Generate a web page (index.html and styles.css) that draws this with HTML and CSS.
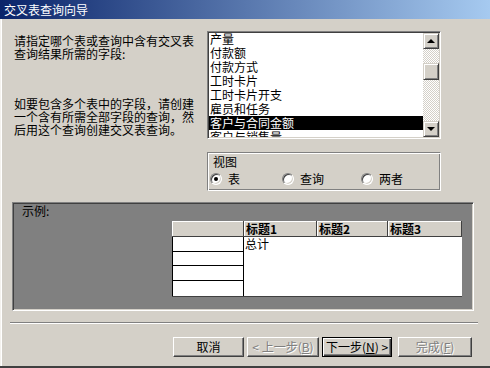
FILE: index.html
```html
<!DOCTYPE html>
<html lang="zh-CN">
<head>
  <meta charset="UTF-8" />
  <title>交叉表查询向导</title>
  <link rel="stylesheet" href="styles.css">
</head>
<body>

<div class="window">
  <!-- Title bar -->
  <div class="titlebar">交叉表查询向导</div>

  <div class="main">
    <div class="top">
      <div class="intro">
        <p>请指定哪个表或查询中含有交叉表<br>查询结果所需的字段:</p>
        <p class="hint">如要包含多个表中的字段，请创建<br>一个含有所需全部字段的查询，然<br>后用这个查询创建交叉表查询。</p>
      </div>

      <div class="side">
        <!-- Table / query list -->
        <div class="listbox">
          <div class="items">
            <ul>
              <li>产量</li>
              <li>付款额</li>
              <li>付款方式</li>
              <li>工时卡片</li>
              <li>工时卡片开支</li>
              <li>雇员和任务</li>
              <li class="selected">客户与合同金额</li>
              <li>客户与销售量</li>
            </ul>
          </div>
          <div class="scrollbar">
            <div class="sb-btn"><span class="arrow-up"></span></div>
            <div class="sb-track"><div class="sb-thumb"></div></div>
            <div class="sb-btn"><span class="arrow-down"></span></div>
          </div>
        </div>

        <!-- View options -->
        <div class="group">
          <div class="group-title">视图</div>
          <div class="options">
            <label class="opt"><span class="radio checked"></span>表</label>
            <label class="opt"><span class="radio"></span>查询</label>
            <label class="opt"><span class="radio"></span>两者</label>
          </div>
        </div>
      </div>
    </div>

    <!-- Sample preview -->
    <div class="sample">
      <div class="sample-title">示例:</div>
      <div class="grid">
        <div class="hd"></div>
        <div class="hd">标题1</div>
        <div class="hd">标题2</div>
        <div class="hd">标题3</div>
        <div class="rh r1"></div>
        <div class="total">总计</div>
        <div class="rh r2"></div>
        <div class="rh r3"></div>
        <div class="rh r4"></div>
      </div>
    </div>

    <div class="separator"></div>

    <!-- Buttons -->
    <div class="buttons">
      <button class="btn cancel">取消</button>
      <button class="btn back disabled">&lt; 上一步(<u>B</u>)</button>
      <button class="btn next default">下一步(<u>N</u>) &gt;</button>
      <button class="btn finish disabled">完成(<u>F</u>)</button>
    </div>
  </div>
</div>

</body>
</html>
```

FILE: styles.css
```css
* {
  box-sizing: border-box;
}

html, body {
  margin: 0;
  padding: 0;
  font-family: "Noto Sans CJK SC", "Liberation Sans", sans-serif;
  font-size: 12px;
  color: #000;
  background-color: #d4d0c8;
}

.window {
  width: 490px;
  height: 368px;
  background-color: #d4d0c8;
  border-bottom: 2px solid #404040;
  box-shadow: inset 1px 0 #f4f2ee, inset 2px 0 #fff;
  overflow: hidden;
}

.titlebar {
  height: 19px;
  line-height: 19px;
  padding-left: 4px;
  color: #fff;
  background: linear-gradient(90deg, #0a246a, #a6caf0);
}

.main {
  padding-left: 12px;
}

.top {
  display: flex;
  margin-top: 12px;
}

.intro {
  width: 195px;
  padding: 3px 0 0 2px;
}

.intro p {
  margin: 0;
  line-height: 13px;
}

.intro .hint {
  margin-top: 37px;
}

.side {
  width: 234px;
}

/* list box */

.listbox {
  display: flex;
  height: 108px;
  background-color: #fff;
  border: 1px solid;
  border-color: #808080 #fff #fff #808080;
  box-shadow: inset 1px 1px #404040, inset -1px -1px #d4d0c8;
  padding: 1px;
}

.items {
  flex: 1;
  overflow: hidden;
}

.items ul {
  list-style: none;
  margin: -1px 0 0;
  padding: 0;
}

.items li {
  height: 14px;
  line-height: 14px;
  padding-left: 1px;
  white-space: nowrap;
}

.items li.selected {
  background-color: #000;
  color: #fff;
}

.scrollbar {
  width: 16px;
  display: flex;
  flex-direction: column;
}

.sb-btn, .sb-thumb {
  background-color: #d4d0c8;
  border: 1px solid;
  border-color: #d4d0c8 #404040 #404040 #d4d0c8;
  box-shadow: inset 1px 1px #fff, inset -1px -1px #808080;
}

.sb-btn {
  height: 16px;
  display: flex;
  align-items: center;
  justify-content: center;
}

.arrow-up, .arrow-down {
  width: 0;
  height: 0;
  border-left: 4px solid transparent;
  border-right: 4px solid transparent;
}

.arrow-up {
  border-bottom: 4px solid #000;
}

.arrow-down {
  border-top: 4px solid #000;
}

.sb-track {
  flex: 1;
  background: repeating-conic-gradient(#fff 0 25%, #d4d0c8 0 50%) 0 0 / 2px 2px;
}

.sb-thumb {
  height: 17px;
  margin-top: 14px;
}

/* view group */

.group {
  margin-top: 13px;
  height: 39px;
  border: 1px solid;
  border-color: #808080 #fff #fff #808080;
  box-shadow: inset 1px 1px #fff, inset -1px -1px #808080;
  padding: 0 1px;
}

.group-title {
  display: inline-block;
  margin: -3px 0 0 3px;
  padding: 0 1px;
  line-height: 14px;
  background-color: #d4d0c8;
}

.options {
  display: grid;
  grid-template-columns: 72px 79px auto;
  margin-top: 2px;
  padding-left: 1px;
}

.opt {
  display: flex;
  align-items: center;
  line-height: 14px;
}

.radio {
  width: 12px;
  height: 12px;
  margin-right: 6px;
  border-radius: 50%;
  background-color: #fff;
  border: 1px solid;
  border-color: #808080 #fff #fff #808080;
  box-shadow: inset 1px 1px #404040, inset -1px -1px #d4d0c8;
  display: flex;
  align-items: center;
  justify-content: center;
}

.radio.checked::after {
  content: '';
  width: 4px;
  height: 4px;
  border-radius: 50%;
  background-color: #000;
}

/* sample preview */

.sample {
  margin-top: 11px;
  width: 462px;
  height: 109px;
  background-color: #808080;
  border: 1px solid;
  border-color: #808080 #fff #fff #808080;
  box-shadow: inset 1px 1px #404040, inset -1px -1px #d4d0c8;
  padding: 1px;
}

.sample-title {
  margin-top: 1px;
  padding-left: 8px;
  line-height: 12px;
}

.grid {
  display: grid;
  width: 290px;
  margin: 4px 0 0 158px;
  grid-template-columns: 72px 73px 71px 74px;
  grid-template-rows: 16px 15px 14px 15px 15px;
  background-color: #fff;
  border-right: 1px solid #404040;
  border-bottom: 1px solid #404040;
}

.hd {
  background-color: #d4d0c8;
  box-shadow: inset 1px 1px #fff;
  border-right: 1px solid #404040;
  border-bottom: 1px solid #404040;
  font-weight: bold;
  line-height: 15px;
  padding-left: 2px;
}

.hd:last-child {
  border-right: none;
}

.rh {
  background-color: #fff;
  border-left: 1px solid #000;
  border-right: 1px solid #000;
  border-bottom: 1px solid #000;
  grid-column: 1;
}

.r4 {
  border-bottom: none;
}

.total {
  grid-column: 2 / 5;
  grid-row: 2 / 6;
  background-color: #fff;
  padding-left: 1px;
  line-height: 13px;
}

.separator {
  margin: 11px 0 0 -2px;
  width: 468px;
  border-top: 1px solid #808080;
  border-bottom: 1px solid #fff;
}

/* buttons */

.buttons {
  display: flex;
  gap: 3px;
  margin: 13px 0 0 161px;
}

.btn {
  height: 20px;
  padding: 0;
  font-family: inherit;
  font-size: 12px;
  line-height: 18px;
  color: #000;
  background-color: #d4d0c8;
  border: 1px solid;
  border-color: #fff #404040 #404040 #fff;
  box-shadow: inset -1px -1px #808080;
}

.btn u {
  text-decoration: underline;
}

.cancel {
  width: 71px;
}

.back {
  width: 72px;
}

.next {
  width: 70px;
}

.finish {
  width: 74px;
  margin-left: 3px;
}

.btn.default {
  border-color: #000;
  box-shadow: inset 1px 1px #fff, inset -1px -1px #404040, inset -2px -2px #808080;
}

.btn.disabled {
  color: #808080;
  text-shadow: 1px 1px #fff;
}
```
